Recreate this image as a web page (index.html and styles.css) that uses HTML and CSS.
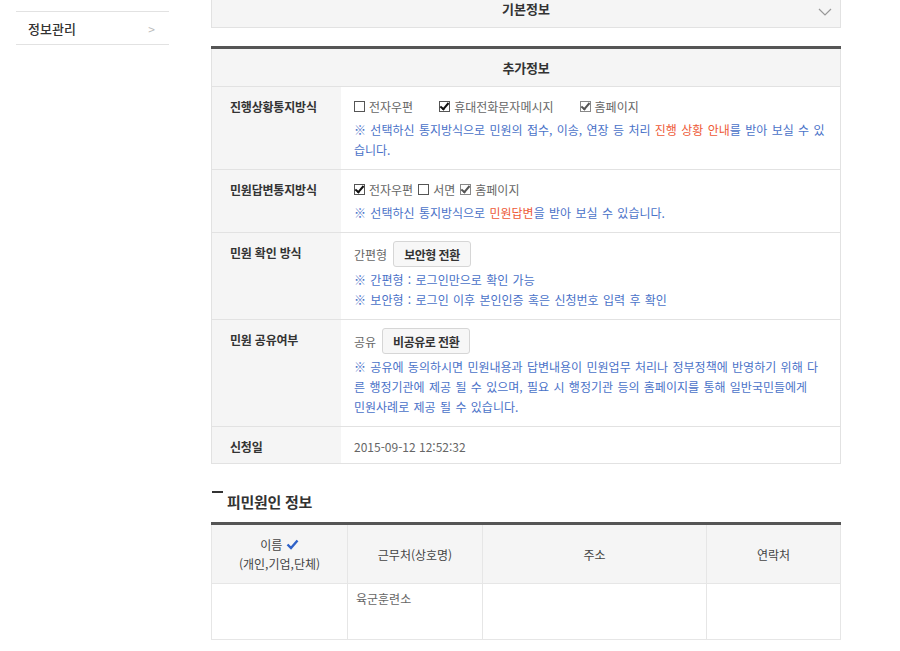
FILE: index.html
```html
<!DOCTYPE html>
<html lang="ko">
<head>
  <meta charset="UTF-8">
  <title>민원 상세정보</title>
  <link rel="stylesheet" href="styles.css">
</head>
<body>
  <div class="wrap">
    <aside class="side">
      <a class="side-item" href="#">정보관리<span class="arr">&gt;</span></a>
    </aside>

    <main class="main">
      <div class="fold">
        기본정보
        <svg class="fold-icon" width="14" height="8" viewBox="0 0 14 8"><path d="M1 1 L7 7 L13 1" fill="none" stroke="#999" stroke-width="1.2"/></svg>
      </div>

      <table class="info">
        <tr><th colspan="2" class="head">추가정보</th></tr>
        <tr>
          <th>진행상황통지방식</th>
          <td>
            <div class="line wide">
              <label><span class="chk"></span>전자우편</label>
              <label><span class="chk on"></span>휴대전화문자메시지</label>
              <label><span class="chk on dis"></span>홈페이지</label>
            </div>
            <p class="note">※ 선택하신 통지방식으로 민원의 접수, 이송, 연장 등 처리 <em>진행 상황 안내</em>를 받아 보실 수 있<br>습니다.</p>
          </td>
        </tr>
        <tr>
          <th>민원답변통지방식</th>
          <td>
            <div class="line">
              <label><span class="chk on"></span>전자우편</label>
              <label><span class="chk"></span>서면</label>
              <label><span class="chk on dis"></span>홈페이지</label>
            </div>
            <p class="note">※ 선택하신 통지방식으로 <em>민원답변</em>을 받아 보실 수 있습니다.</p>
          </td>
        </tr>
        <tr>
          <th>민원 확인 방식</th>
          <td>
            <div class="line">간편형 <button type="button">보안형 전환</button></div>
            <p class="note">※ 간편형 : 로그인만으로 확인 가능<br>※ 보안형 : 로그인 이후 본인인증 혹은 신청번호 입력 후 확인</p>
          </td>
        </tr>
        <tr>
          <th>민원 공유여부</th>
          <td>
            <div class="line">공유 <button type="button">비공유로 전환</button></div>
            <p class="note">※ 공유에 동의하시면 민원내용과 답변내용이 민원업무 처리나 정부정책에 반영하기 위해 다<br>른 행정기관에 제공 될 수 있으며, 필요 시 행정기관 등의 홈페이지를 통해 일반국민들에게<br>민원사례로 제공 될 수 있습니다.</p>
          </td>
        </tr>
        <tr class="last">
          <th>신청일</th>
          <td><div class="line">2015-09-12 12:52:32</div></td>
        </tr>
      </table>

      <h3 class="sub">피민원인 정보</h3>

      <table class="grid">
        <tr>
          <th class="c1">이름 <svg width="13" height="11" viewBox="0 0 13 11"><path d="M1.5 5.5 L5 9 L11.5 1.5" fill="none" stroke="#2f62c8" stroke-width="2.4"/></svg><br>(개인,기업,단체)</th>
          <th class="c2">근무처(상호명)</th>
          <th class="c3">주소</th>
          <th class="c4">연락처</th>
        </tr>
        <tr>
          <td></td>
          <td>육군훈련소</td>
          <td></td>
          <td></td>
        </tr>
      </table>
    </main>
  </div>
</body>
</html>
```

FILE: styles.css
```css
body {
  margin: 0;
  font-family: "Noto Sans CJK KR", "Noto Sans", sans-serif;
  font-size: 12px;
  color: #555;
  background: #fff;
}
.wrap {
  display: flex;
  align-items: flex-start;
  padding-left: 16px;
  gap: 42px;
}
.side {
  width: 153px;
  padding-top: 11px;
}
.side-item {
  display: flex;
  justify-content: space-between;
  align-items: center;
  height: 32px;
  padding: 0 14px 0 12px;
  border-top: 1px solid #e2e2e2;
  border-bottom: 1px solid #e2e2e2;
  color: #333;
  font-size: 13px;
  font-weight: 500;
  text-decoration: none;
}
.side-item .arr {
  color: #bbb;
  font-size: 12px;
  font-weight: normal;
}
.main {
  width: 630px;
}
.fold {
  position: relative;
  margin-top: -10px;
  height: 37px;
  line-height: 37px;
  text-align: center;
  background: #f5f5f5;
  border: 1px solid #e2e2e2;
  border-top: none;
  font-size: 13px;
  font-weight: bold;
  color: #333;
}
.fold-icon {
  position: absolute;
  right: 8px;
  top: 18px;
}
table {
  width: 100%;
  border-collapse: collapse;
}
.info {
  margin-top: 18px;
  border-top: 3px solid #555;
  border-left: 1px solid #e2e2e2;
  border-right: 1px solid #e2e2e2;
}
.info th,
.info td {
  border-bottom: 1px solid #e2e2e2;
  vertical-align: top;
  text-align: left;
}
.info th {
  width: 111px;
  padding: 10px 0 0 18px;
  background: #f5f5f5;
  color: #333;
  font-weight: bold;
  line-height: 20px;
  letter-spacing: -0.2px;
}
.info th.head {
  height: 37px;
  padding: 0;
  text-align: center;
  vertical-align: middle;
  font-size: 13px;
}
.info td {
  padding: 8px 10px 9px 13px;
  color: #666;
}
.line {
  display: flex;
  align-items: center;
  gap: 5px;
  min-height: 22px;
}
.line.wide {
  gap: 26px;
}
.line label {
  display: flex;
  align-items: center;
}
.chk {
  position: relative;
  box-sizing: border-box;
  width: 11px;
  height: 11px;
  margin-right: 4px;
  border: 1px solid #555;
  background: #fff;
}
.chk.on::after {
  content: "";
  position: absolute;
  left: 2px;
  top: -1px;
  width: 3px;
  height: 7px;
  border-right: 2px solid #111;
  border-bottom: 2px solid #111;
  transform: rotate(40deg);
}
.chk.dis {
  border-color: #888;
}
.chk.dis::after {
  border-color: #555;
}
button {
  height: 26px;
  padding: 0 10px;
  margin-left: 1px;
  background: #f7f7f7;
  border: 1px solid #d6d6d6;
  border-radius: 3px;
  font-family: inherit;
  font-size: 12px;
  font-weight: bold;
  color: #333;
  letter-spacing: -0.5px;
}
.note {
  margin: 3px 0 0;
  line-height: 20px;
  color: #4a72c8;
  word-spacing: 1px;
}
.note em {
  font-style: normal;
  color: #ee5a37;
}
.info tr.last td {
  padding-bottom: 6px;
}
.sub {
  position: relative;
  margin: 27px 0 0;
  padding-left: 16px;
  font-size: 15px;
  font-weight: bold;
  color: #333;
  line-height: 22px;
  letter-spacing: -0.3px;
}
.sub::before {
  content: "";
  position: absolute;
  left: 1px;
  top: 0;
  width: 11px;
  height: 2px;
  background: #333;
}
.grid {
  margin-top: 9px;
  border-top: 3px solid #555;
  border-left: 1px solid #e2e2e2;
  border-right: 1px solid #e2e2e2;
}
.grid th,
.grid td {
  border: 1px solid #e6e6e6;
  border-top: none;
}
.grid th {
  height: 58px;
  padding: 0;
  background: #f5f5f5;
  font-weight: normal;
  color: #444;
  line-height: 19px;
}
.grid th.c1 { width: 135px; }
.grid th.c2 { width: 134px; }
.grid th.c3 { width: 223px; }
.grid td {
  height: 43px;
  padding: 6px 8px;
  vertical-align: top;
  color: #666;
}
```
